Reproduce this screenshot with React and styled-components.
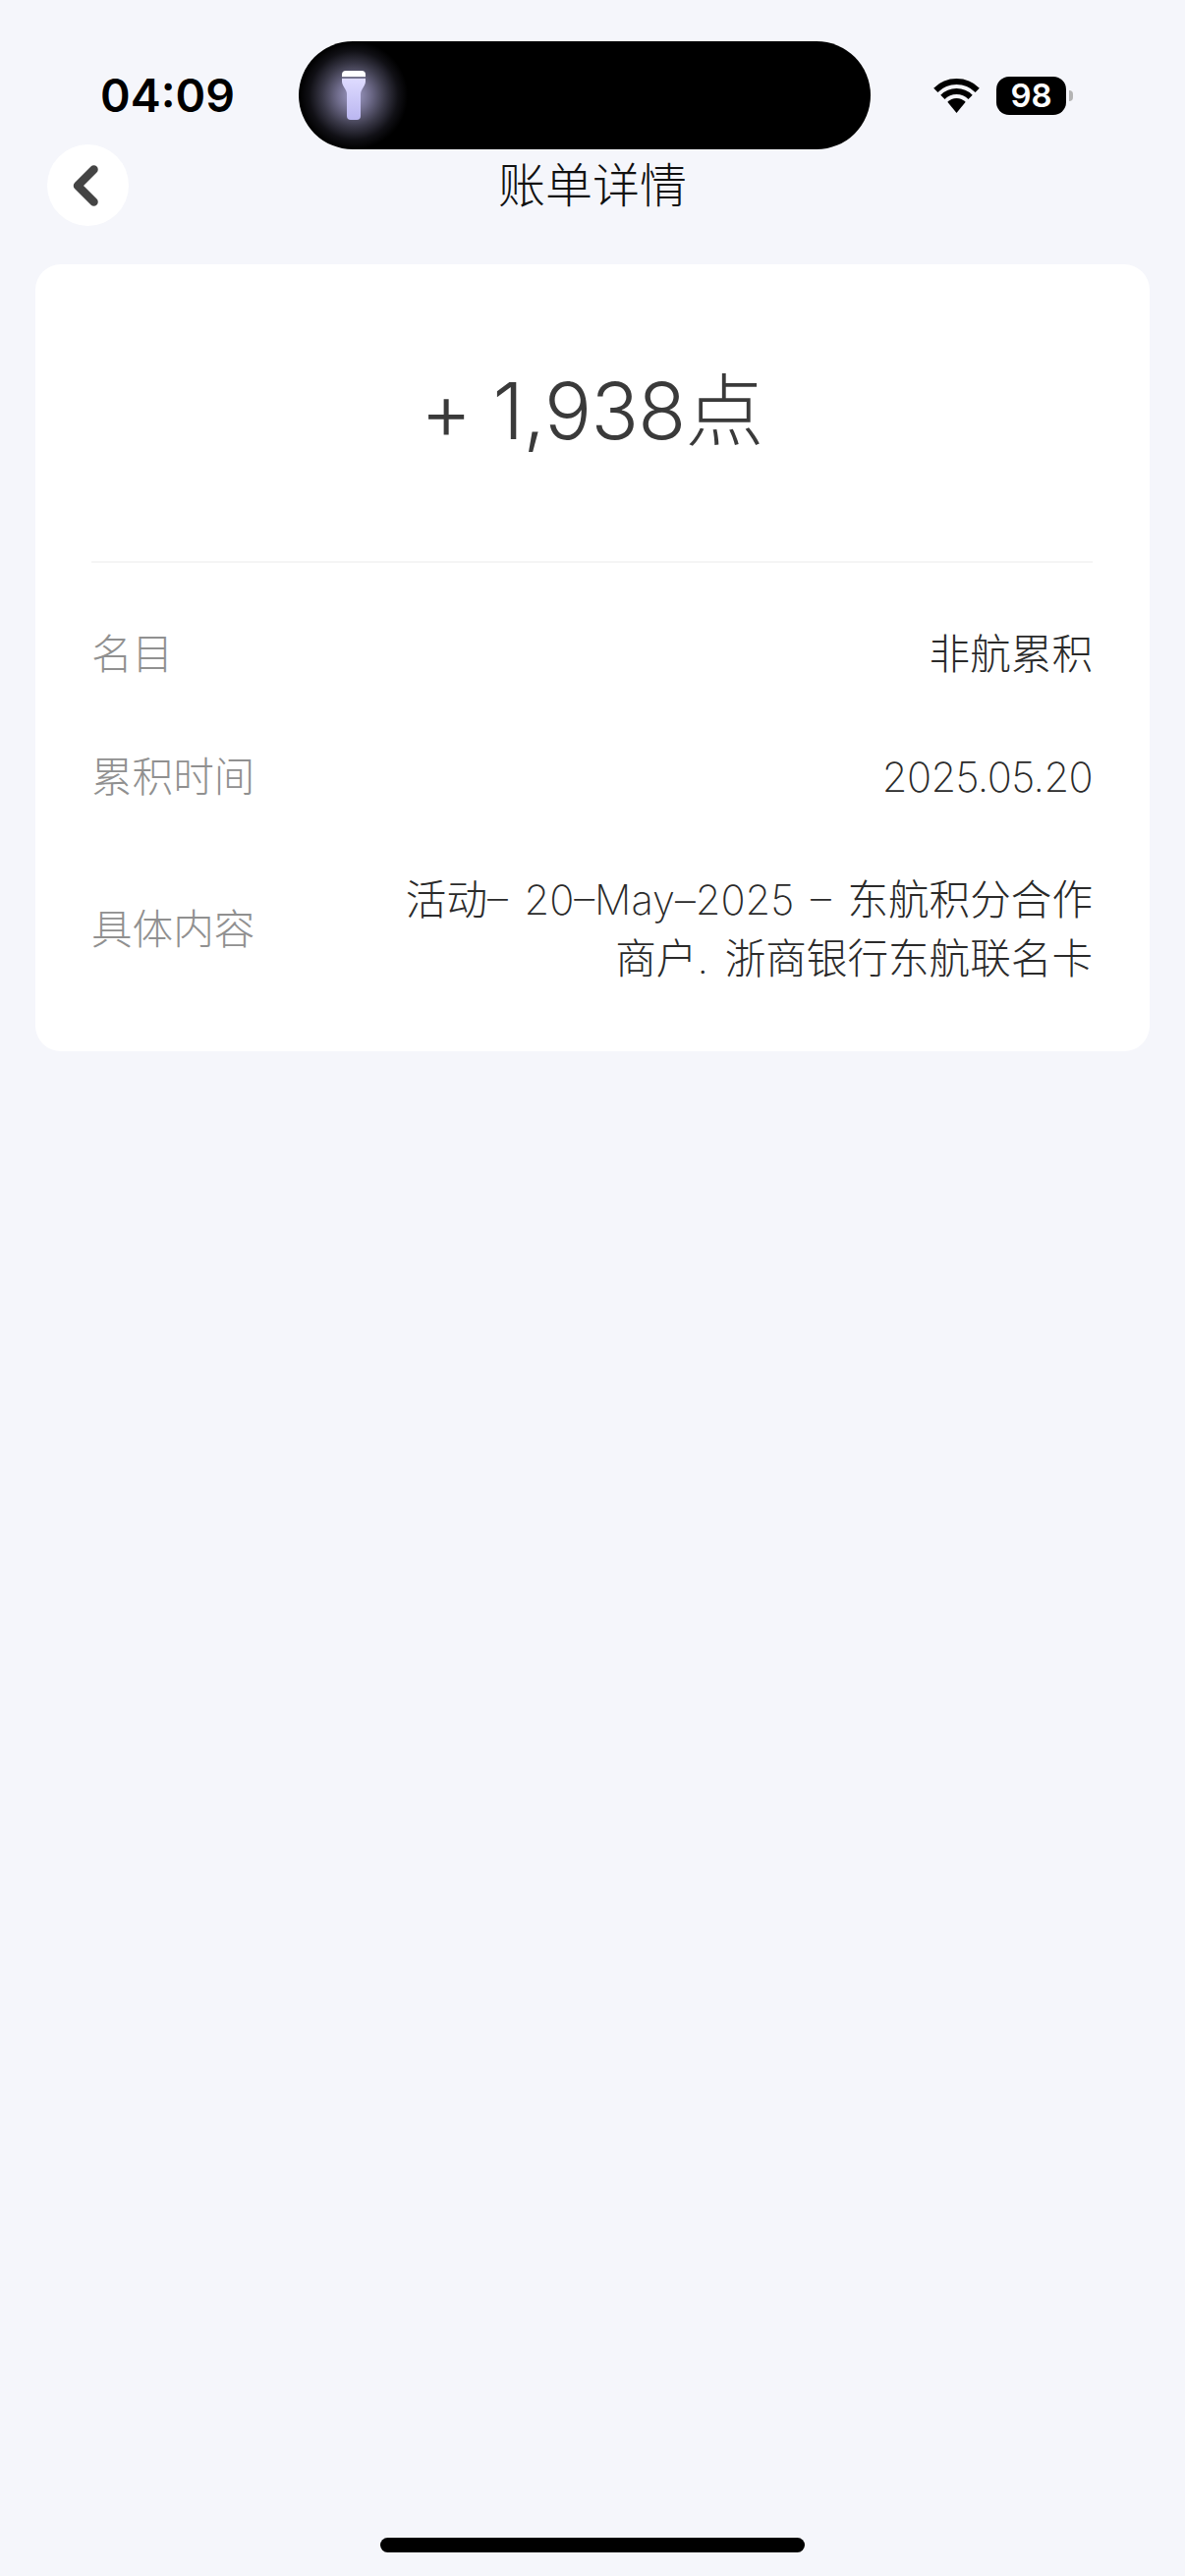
import styled, { createGlobalStyle } from 'styled-components'

const GlobalStyle = createGlobalStyle`
    html, body {
        margin: 0;
        padding: 0;
        background: #f5f6fb;
    }
    * {
        box-sizing: border-box;
    }
`;

const Page = styled.div`
    width: 1206px;
    height: 2622px;
    display: flex;
    flex-direction: column;
    background: #f5f6fb;
    font-family: Inter, "Noto Sans CJK SC", sans-serif;
    overflow: hidden;
`;

const StatusBar = styled.div`
    height: 152px;
    padding-top: 42px;
    display: grid;
    grid-template-columns: 304px 582px 1fr;
    align-items: center;
`;

const Time = styled.div`
    padding-left: 102px;
    font-size: 46.5px;
    font-weight: 600;
    color: #000;
`;

const Island = styled.div`
    height: 110px;
    border-radius: 55px;
    background: #000;
    display: flex;
    align-items: center;
`;

const Glow = styled.div`
    width: 112px;
    height: 110px;
    display: flex;
    align-items: center;
    justify-content: center;
    background: radial-gradient(circle closest-side, rgba(180, 176, 225, 0.9) 0%, rgba(140, 136, 175, 0.8) 30%, rgba(96, 94, 120, 0.6) 58%, rgba(48, 47, 62, 0.35) 82%, rgba(0, 0, 0, 0) 100%);
`;

const Indicators = styled.div`
    padding-left: 64px;
    display: flex;
    align-items: center;
`;

const Battery = styled.div`
    width: 71px;
    height: 39px;
    margin-left: 17px;
    border-radius: 13px;
    background: #000;
    color: #fff;
    font-size: 33px;
    font-weight: 600;
    line-height: 39px;
    text-align: center;
`;

const BatteryTip = styled.div`
    width: 4px;
    height: 11px;
    margin-left: 3px;
    border-radius: 0 6px 6px 0;
    background: #b4b4b4;
`;

const Header = styled.div`
    height: 83px;
    margin-top: -5px;
    display: grid;
    grid-template-columns: 1fr auto 1fr;
    align-items: center;
`;

const BackButton = styled.div`
    width: 83px;
    height: 83px;
    margin-left: 48px;
    padding-right: 6px;
    border-radius: 50%;
    background: #fff;
    display: flex;
    align-items: center;
    justify-content: center;
`;

const Title = styled.div`
    font-size: 48px;
    font-weight: 200;
    line-height: 83px;
    color: #111;
`;

const Card = styled.div`
    margin: 39px 36px 0;
    padding: 0 58px 64px 57px;
    border-radius: 26px;
    background: #fff;
`;

const Amount = styled.div`
    height: 304px;
    padding-bottom: 16px;
    border-bottom: 2px solid #f5f5f5;
    display: flex;
    align-items: center;
    justify-content: center;
    font-size: 80px;
    font-weight: 300;
    letter-spacing: -0.6px;
    color: #3a3a3a;
`;

const Rows = styled.div`
    padding-top: 63px;
    display: flex;
    flex-direction: column;
    gap: 65px;
`;

const Row = styled.div`
    display: flex;
    align-items: center;
    justify-content: space-between;
    font-size: 41.6px;
    font-weight: 200;
    line-height: 60px;
`;

const Label = styled.div`
    color: #909090;
`;

const Value = styled.div`
    max-width: 720px;
    text-align: right;
    word-spacing: 5px;
    letter-spacing: ${props => (props.$tight ? '-0.6px' : '0')};
    color: #2a2a2a;
`;

const HomeBar = styled.div`
    width: 432px;
    height: 15px;
    margin: auto auto 24px;
    border-radius: 8px;
    background: #000;
`;

const Flashlight = () => (
    <svg width="24" height="50" viewBox="0 0 24 50">
        <defs>
            <linearGradient id="beam" x1="0" y1="0" x2="0" y2="1">
                <stop offset="0" stopColor="#dedbff" />
                <stop offset="1" stopColor="#bab6f0" />
            </linearGradient>
        </defs>
        <path d="M0 6V4a4 4 0 0 1 4-4h16a4 4 0 0 1 4 4v2z" fill="#fff" />
        <rect x="0" y="6" width="24" height="2" fill="#77758f" />
        <path d="M0 8h24v3c0 3-2 5-3.5 8-1 2-1.5 3-1.5 5v22a4 4 0 0 1-4 4H9a4 4 0 0 1-4-4V24c0-2-.5-3-1.5-5C2 16 0 14 0 11z" fill="url(#beam)" />
    </svg>
)

const Wifi = () => (
    <svg width="47" height="35" viewBox="0 0 47 35">
        <path d="M2.3 11.8A30 30 0 0 1 44.7 11.8" fill="none" stroke="#000" strokeWidth="6" />
        <path d="M9.4 18.9A20 20 0 0 1 37.6 18.9" fill="none" stroke="#000" strokeWidth="6" />
        <path d="M14.3 23.8A13 13 0 0 1 32.7 23.8L23.5 35z" fill="#000" />
    </svg>
)

const Chevron = () => (
    <svg width="26" height="42" viewBox="0 0 26 42">
        <path d="M21.5 4.5L5 21l16.5 16.5" fill="none" stroke="#444" strokeWidth="8.5" strokeLinecap="round" strokeLinejoin="round" />
    </svg>
)

const App = () => {
    return (
        <Page>
            <GlobalStyle />
            <StatusBar>
                <Time>04:09</Time>
                <Island>
                    <Glow>
                        <Flashlight />
                    </Glow>
                </Island>
                <Indicators>
                    <Wifi />
                    <Battery>98</Battery>
                    <BatteryTip />
                </Indicators>
            </StatusBar>
            <Header>
                <BackButton>
                    <Chevron />
                </BackButton>
                <Title>账单详情</Title>
            </Header>
            <Card>
                <Amount>+ 1,938点</Amount>
                <Rows>
                    <Row>
                        <Label>名目</Label>
                        <Value>非航累积</Value>
                    </Row>
                    <Row>
                        <Label>累积时间</Label>
                        <Value $tight>2025.05.20</Value>
                    </Row>
                    <Row>
                        <Label>具体内容</Label>
                        <Value>活动– 20–May–2025 – 东航积分合作商户. 浙商银行东航联名卡</Value>
                    </Row>
                </Rows>
            </Card>
            <HomeBar />
        </Page>
    )
}

export default App
